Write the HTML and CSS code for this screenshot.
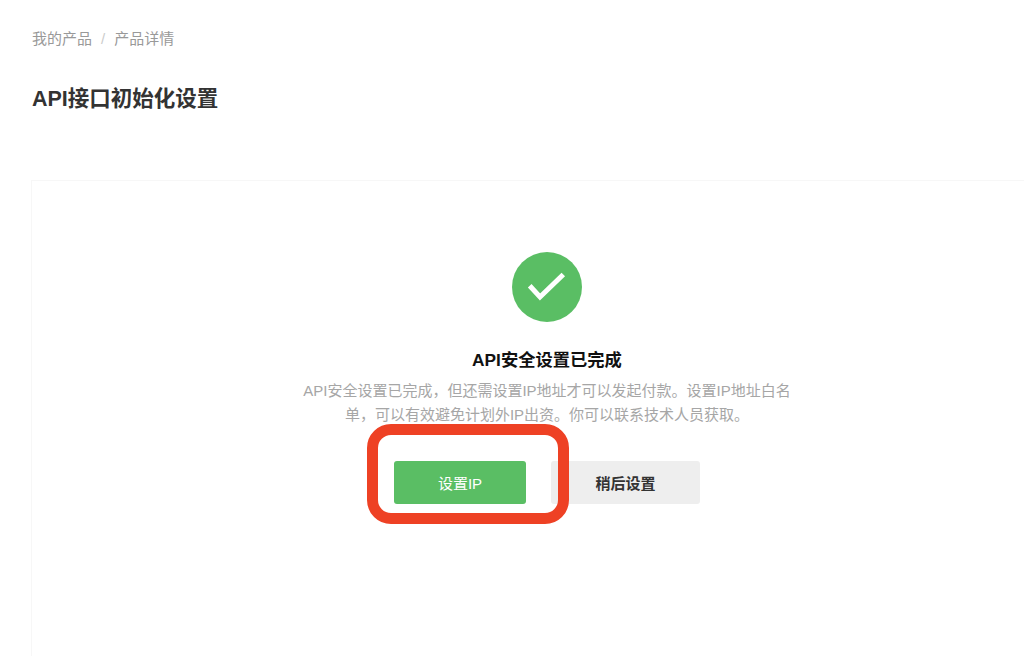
FILE: index.html
```html
<!DOCTYPE html>
<html lang="zh-CN">
<head>
  <meta charset="UTF-8">
  <title>API接口初始化设置</title>
  <link rel="stylesheet" href="styles.css">
</head>
<body>
  <div class="page">
    <div class="breadcrumb">
      <span>我的产品</span>
      <span class="sep">/</span>
      <span>产品详情</span>
    </div>
    <h1>API接口初始化设置</h1>

    <div class="card">
      <div class="icon">
        <svg width="70" height="70" viewBox="0 0 70 70">
          <circle cx="35" cy="35" r="35" fill="#5abe64"/>
          <path d="M17.7 33.8L28 45L51.3 22.5" fill="none" stroke="#fff" stroke-width="5"/>
        </svg>
      </div>
      <h2>API安全设置已完成</h2>
      <p class="desc">API安全设置已完成，但还需设置IP地址才可以发起付款。设置IP地址白名单，可以有效避免计划外IP出资。你可以联系技术人员获取。</p>
      <div class="actions">
        <button class="primary">设置IP</button>
        <button class="secondary">稍后设置</button>
        <div class="highlight"></div>
      </div>
    </div>
  </div>
</body>
</html>
```

FILE: styles.css
```css
html, body {
  height: 100%;
}
body {
  margin: 0;
  overflow: hidden;
  background: #fff;
  font-family: "Liberation Sans", "Noto Sans CJK SC", sans-serif;
}
.page {
  height: 100%;
  padding: 30px 0 0 31px;
  box-sizing: border-box;
  display: flex;
  flex-direction: column;
}
.breadcrumb {
  display: flex;
  gap: 9px;
  padding-left: 1px;
  font-size: 15px;
  line-height: 18px;
  color: #999;
}
.breadcrumb .sep {
  color: #ccc;
}
h1 {
  margin: 31px 0 0 1px;
  font-size: 21.5px;
  line-height: 40px;
  font-weight: bold;
  color: #333;
}
.card {
  margin-top: 61px;
  flex: 1;
  padding: 71px 0 0 38px;
  box-sizing: border-box;
  border: 1px solid #f7f7f7;
  border-width: 1px 0 0 1px;
  display: flex;
  flex-direction: column;
  align-items: center;
}
.icon {
  height: 70px;
}
h2 {
  margin: 27px 0 0;
  font-size: 17.3px;
  line-height: 22px;
  font-weight: bold;
  color: #111;
}
.desc {
  width: 490px;
  margin: 8px 0 0;
  font-size: 15px;
  line-height: 24px;
  color: #a6a6a6;
  text-align: center;
}
.actions {
  position: relative;
  display: flex;
  gap: 25px;
  margin-top: 34px;
}
button {
  height: 43px;
  border: none;
  border-radius: 3px;
  font-family: inherit;
  font-size: 15px;
  padding: 0;
}
.primary {
  width: 132px;
  background: #5abe64;
  color: #fff;
}
.secondary {
  width: 149px;
  background: #eee;
  color: #333;
  font-weight: bold;
}
.highlight {
  position: absolute;
  left: -27px;
  top: -37px;
  width: 202px;
  height: 100px;
  box-sizing: border-box;
  border: 11px solid #ee4124;
  border-radius: 24px;
}
```
